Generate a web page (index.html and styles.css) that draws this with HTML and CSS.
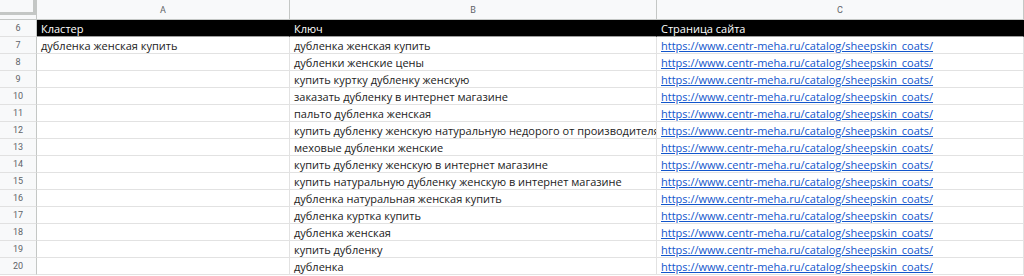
FILE: index.html
```html
<!DOCTYPE html>
<html lang="ru">
<head>
<meta charset="utf-8">
<link rel="stylesheet" href="styles.css">
</head>
<body>
<div class="sheet">
  <div class="corner"><div class="corner-box"></div></div>
  <div class="colhead">A</div>
  <div class="colhead">B</div>
  <div class="colhead">C</div>

  <div class="rownum">6</div>
  <div class="cell hdr">Кластер</div>
  <div class="cell hdr">Ключ</div>
  <div class="cell hdr">Страница сайта</div>

  <div class="rownum">7</div>
  <div class="cell">дубленка женская купить</div>
  <div class="cell">дубленка женская купить</div>
  <div class="cell"><a href="#">https://www.centr-meha.ru/catalog/sheepskin_coats/</a></div>

  <div class="rownum">8</div>
  <div class="cell"></div>
  <div class="cell">дубленки женские цены</div>
  <div class="cell"><a href="#">https://www.centr-meha.ru/catalog/sheepskin_coats/</a></div>

  <div class="rownum">9</div>
  <div class="cell"></div>
  <div class="cell">купить куртку дубленку женскую</div>
  <div class="cell"><a href="#">https://www.centr-meha.ru/catalog/sheepskin_coats/</a></div>

  <div class="rownum">10</div>
  <div class="cell"></div>
  <div class="cell">заказать дубленку в интернет магазине</div>
  <div class="cell"><a href="#">https://www.centr-meha.ru/catalog/sheepskin_coats/</a></div>

  <div class="rownum">11</div>
  <div class="cell"></div>
  <div class="cell">пальто дубленка женская</div>
  <div class="cell"><a href="#">https://www.centr-meha.ru/catalog/sheepskin_coats/</a></div>

  <div class="rownum">12</div>
  <div class="cell"></div>
  <div class="cell">купить дубленку женскую натуральную недорого от производителя</div>
  <div class="cell"><a href="#">https://www.centr-meha.ru/catalog/sheepskin_coats/</a></div>

  <div class="rownum">13</div>
  <div class="cell"></div>
  <div class="cell">меховые дубленки женские</div>
  <div class="cell"><a href="#">https://www.centr-meha.ru/catalog/sheepskin_coats/</a></div>

  <div class="rownum">14</div>
  <div class="cell"></div>
  <div class="cell">купить дубленку женскую в интернет магазине</div>
  <div class="cell"><a href="#">https://www.centr-meha.ru/catalog/sheepskin_coats/</a></div>

  <div class="rownum">15</div>
  <div class="cell"></div>
  <div class="cell">купить натуральную дубленку женскую в интернет магазине</div>
  <div class="cell"><a href="#">https://www.centr-meha.ru/catalog/sheepskin_coats/</a></div>

  <div class="rownum">16</div>
  <div class="cell"></div>
  <div class="cell">дубленка натуральная женская купить</div>
  <div class="cell"><a href="#">https://www.centr-meha.ru/catalog/sheepskin_coats/</a></div>

  <div class="rownum">17</div>
  <div class="cell"></div>
  <div class="cell">дубленка куртка купить</div>
  <div class="cell"><a href="#">https://www.centr-meha.ru/catalog/sheepskin_coats/</a></div>

  <div class="rownum">18</div>
  <div class="cell"></div>
  <div class="cell">дубленка женская</div>
  <div class="cell"><a href="#">https://www.centr-meha.ru/catalog/sheepskin_coats/</a></div>

  <div class="rownum">19</div>
  <div class="cell"></div>
  <div class="cell">купить дубленку</div>
  <div class="cell"><a href="#">https://www.centr-meha.ru/catalog/sheepskin_coats/</a></div>

  <div class="rownum">20</div>
  <div class="cell"></div>
  <div class="cell">дубленка</div>
  <div class="cell"><a href="#">https://www.centr-meha.ru/catalog/sheepskin_coats/</a></div>
</div>
</body>
</html>
```
FILE: styles.css
```css
html, body {
  margin: 0;
  padding: 0;
  background: #ffffff;
}
body {
  font-family: "Open Sans", "Liberation Sans", sans-serif;
  overflow: hidden;
}
.sheet {
  display: grid;
  grid-template-columns: 37px 253px 367px 367px;
  grid-template-rows: 20px repeat(15, 17px);
  width: 1024px;
}
.corner {
  background: #f8f9fa;
  border-right: 1px solid #c4c7c5;
  border-bottom: 1px solid #c4c7c5;
  box-sizing: border-box;
}
.corner-box {
  width: 33px;
  height: 12px;
  border-right: 3px solid #c4c7c5;
  border-bottom: 3px solid #c4c7c5;
  background: #f8f9fa;
}
.colhead {
  background: #f8f9fa;
  border-right: 1px solid #c4c7c5;
  border-bottom: 1px solid #c4c7c5;
  box-sizing: border-box;
  font-family: Roboto, "Liberation Sans", sans-serif;
  font-size: 9px;
  color: #5f6368;
  display: flex;
  align-items: center;
  justify-content: center;
}
.rownum {
  background: #f8f9fa;
  border-right: 1px solid #c4c7c5;
  border-bottom: 1px solid #e1e1e1;
  box-sizing: border-box;
  font-family: Roboto, "Liberation Sans", sans-serif;
  font-size: 9px;
  color: #5f6368;
  display: flex;
  align-items: center;
  justify-content: center;
}
.cell {
  border-right: 1px solid #e2e2e2;
  border-bottom: 1px solid #e2e2e2;
  box-sizing: border-box;
  font-size: 11px;
  line-height: 17px;
  color: #222222;
  padding: 0 4px;
  white-space: nowrap;
  overflow: hidden;
}
.cell.hdr {
  background: #000000;
  color: #ffffff;
  border-right-color: #000000;
  border-bottom-color: #9e9e9e;
}
.cell a {
  color: #1155cc;
  text-decoration: underline;
}
```
